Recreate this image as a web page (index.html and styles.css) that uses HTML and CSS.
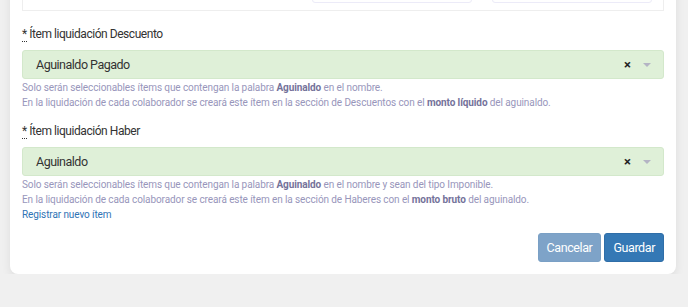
FILE: index.html
```html
<!DOCTYPE html>
<html lang="es">
<head>
    <meta charset="UTF-8">
    <meta name="viewport" content="width=device-width, initial-scale=1.0">
    <title>Aguinaldo</title>
    <link rel="stylesheet" href="styles.css">
</head>
<body>

<div class="card">
    <div class="summary">
        <div class="summary-field"></div>
        <div class="summary-field"></div>
    </div>

    <div class="form-group">
        <label class="form-label"><abbr title="requerido">*</abbr> Ítem liquidación Descuento</label>
        <div class="select">
            <span class="select-value">Aguinaldo Pagado</span>
            <span class="select-clear">×</span>
            <span class="select-caret"></span>
        </div>
        <p class="help">Solo serán seleccionables ítems que contengan la palabra <b>Aguinaldo</b> en el nombre.</p>
        <p class="help">En la liquidación de cada colaborador se creará este ítem en la sección de Descuentos con el <b>monto líquido</b> del aguinaldo.</p>
    </div>

    <div class="form-group">
        <label class="form-label"><abbr title="requerido">*</abbr> Ítem liquidación Haber</label>
        <div class="select">
            <span class="select-value">Aguinaldo</span>
            <span class="select-clear">×</span>
            <span class="select-caret"></span>
        </div>
        <p class="help">Solo serán seleccionables ítems que contengan la palabra <b>Aguinaldo</b> en el nombre y sean del tipo Imponible.</p>
        <p class="help">En la liquidación de cada colaborador se creará este ítem en la sección de Haberes con el <b>monto bruto</b> del aguinaldo.</p>
        <a class="link" href="#">Registrar nuevo ítem</a>
    </div>

    <div class="actions">
        <button class="btn btn-cancel">Cancelar</button>
        <button class="btn btn-save">Guardar</button>
    </div>
</div>

</body>
</html>
```

FILE: styles.css
```css
body {
    font-family: Roboto, "Liberation Sans", Arial, sans-serif;
    background-color: #f0f0f0;
    margin: 0;
    padding: 0 12px 0 10px;
}
.card {
    margin-top: -40px;
    background: #fff;
    padding: 12px;
    border-radius: 0 0 8px 8px;
    box-shadow: 0 4px 10px rgba(0, 0, 0, 0.08);
}
.summary {
    height: 37px;
    border: 1px solid #eeeeee;
    display: flex;
    justify-content: flex-end;
    gap: 20px;
    padding-right: 11px;
}
.summary-field {
    width: 158px;
    height: 28px;
    border: 1px solid #ecebf8;
    border-radius: 3px;
}
.form-group {
    margin-top: 16px;
}
.form-group + .form-group {
    margin-top: 14px;
}
.form-label {
    display: block;
    font-size: 12px;
    letter-spacing: -0.45px;
    line-height: 15px;
    color: #333;
    margin-bottom: 8px;
}
.form-label abbr {
    text-decoration: none;
    border-bottom: 1px dotted #333;
}
.select {
    display: flex;
    align-items: center;
    height: 27px;
    background: #dff0d8;
    border: 1px solid #d3e8cb;
    border-radius: 3px;
    padding: 0 12px 0 13px;
}
.select-value {
    flex: 1;
    font-size: 12.5px;
    letter-spacing: -0.5px;
    color: #333;
}
.select-clear {
    font-size: 13px;
    font-weight: bold;
    color: #222;
    margin-right: 12px;
}
.select-caret {
    width: 0;
    height: 0;
    border-left: 4px solid transparent;
    border-right: 4px solid transparent;
    border-top: 4px solid #b4b4c4;
}
.help {
    margin: 0;
    font-size: 10px;
    letter-spacing: -0.1px;
    line-height: 14.5px;
    color: #9896bb;
}
.select + .help {
    margin-top: 2px;
}
.help b {
    color: #74729a;
}
.link {
    display: block;
    font-size: 10px;
    letter-spacing: -0.1px;
    line-height: 15px;
    color: #2f73b5;
    text-decoration: none;
}
.actions {
    display: flex;
    justify-content: flex-end;
    gap: 3px;
    margin-top: 11px;
}
.btn {
    font-family: inherit;
    font-size: 12.5px;
    letter-spacing: -0.4px;
    color: #fff;
    border: 1px solid transparent;
    border-radius: 3px;
    height: 29px;
    padding: 0 8px;
}
.btn-cancel {
    background: #7ea3c8;
    border-color: #7aa0c5;
}
.btn-save {
    background: #3478b5;
    border-color: #2f6ea8;
}
```
